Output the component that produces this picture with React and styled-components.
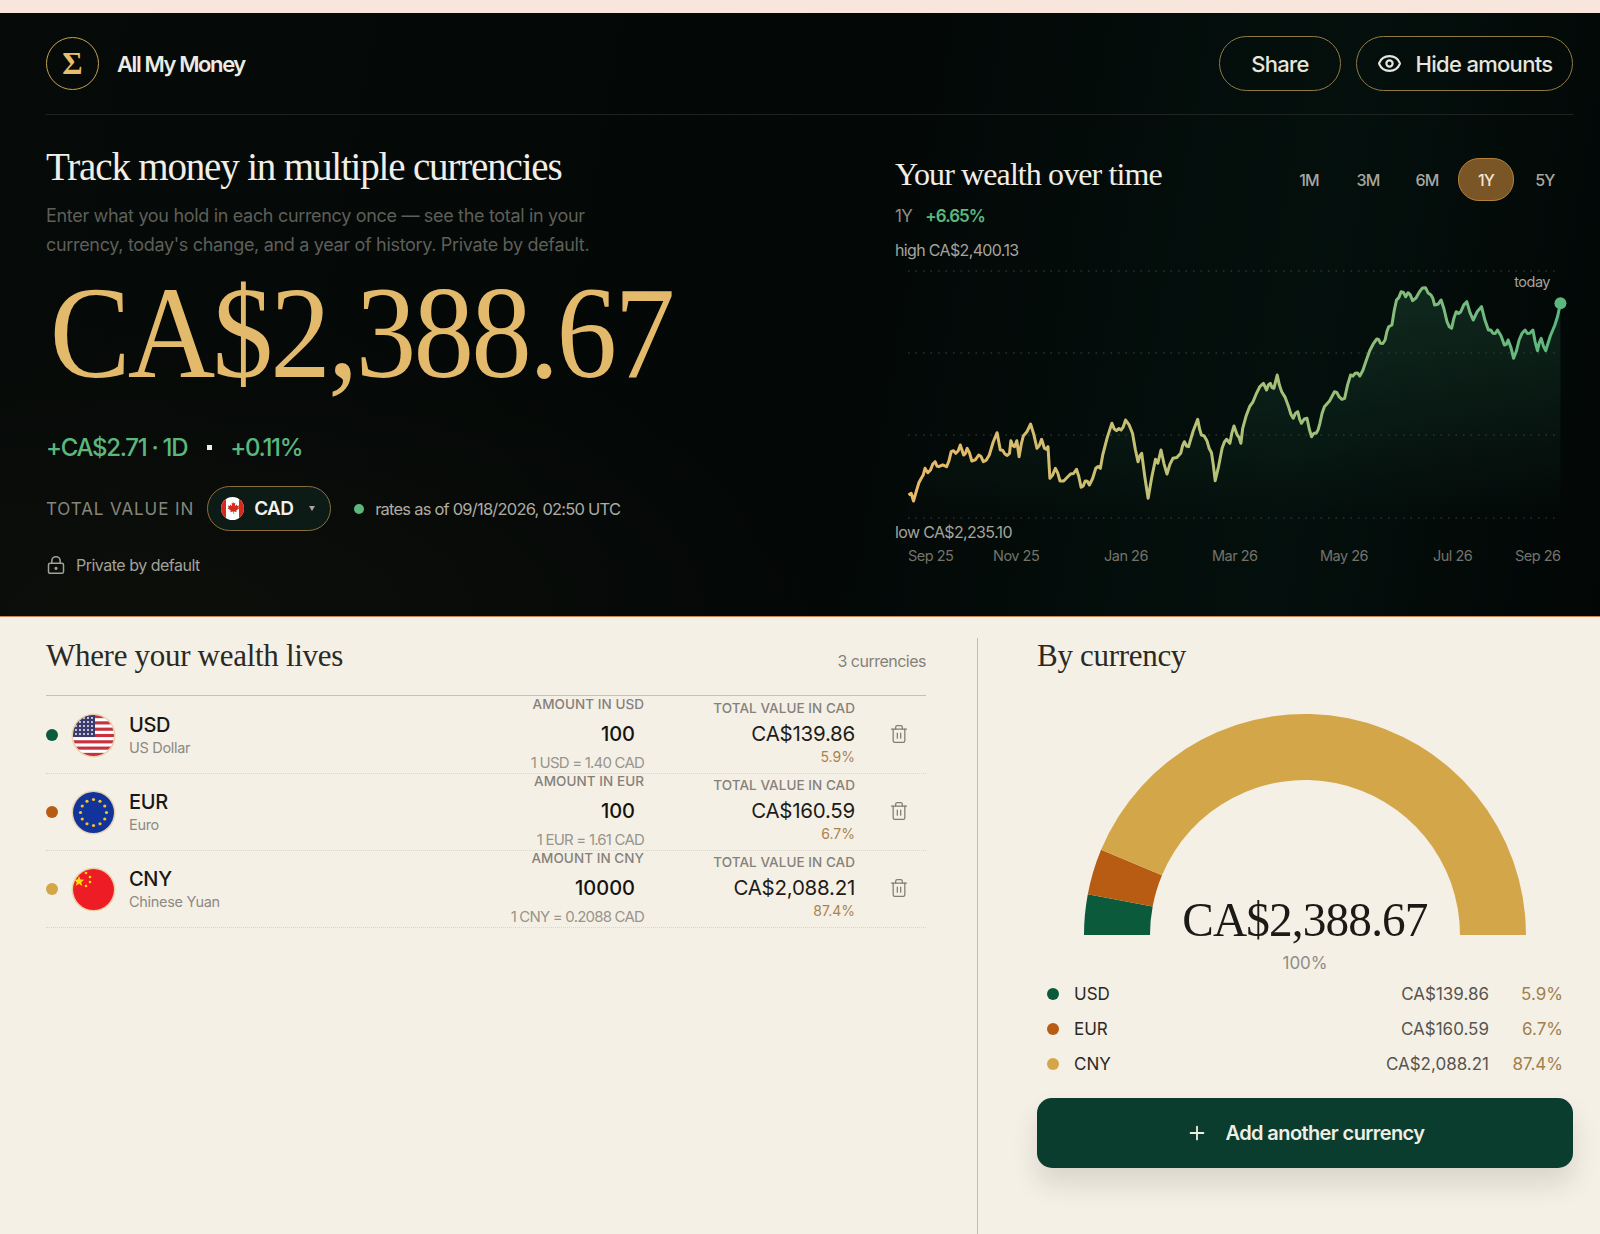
import React from 'react';
import styled, { createGlobalStyle } from 'styled-components';
import { Eye, LockKeyhole, Plus, Trash2 } from 'lucide-react';

const sans = `Inter, "Liberation Sans", sans-serif`;
const serif = `"Liberation Serif", serif`;

const GlobalStyle = createGlobalStyle`
  html, body {
    margin: 0;
    padding: 0;
    background: #f5f0e6;
  }
  body {
    font-family: ${sans};
    overflow: hidden;
  }
`;

const Page = styled.div`
  width: 1600px;
  height: 1234px;
  display: flex;
  flex-direction: column;
  background: #f5f0e6;
`;

const TopStrip = styled.div`
  height: 13px;
  background: #f8e6dd;
`;

const Hero = styled.section`
  height: 603px;
  padding: 0 27px 0 46px;
  box-sizing: content-box;
  background:
    radial-gradient(700px 300px at 10% 100%, #0c0e0a 0%, rgba(12, 14, 10, 0) 100%),
    linear-gradient(100deg, #060a08 0%, #030706 50%, #04100d 80%, #020605 100%);
  border-bottom: 1px solid #c98355;
`;

const Header = styled.header`
  height: 101px;
  display: flex;
  align-items: center;
  justify-content: space-between;
  border-bottom: 1px solid #1f2420;
`;

const Brand = styled.div`
  display: flex;
  align-items: center;
  gap: 18px;
`;

const Logo = styled.div`
  width: 51px;
  height: 51px;
  border: 1.5px solid #c9a253;
  border-radius: 50%;
  display: flex;
  align-items: center;
  justify-content: center;
  font: 700 31px ${serif};
  color: #e8bd6c;
`;

const BrandName = styled.div`
  font-size: 22px;
  font-weight: 600;
  letter-spacing: -1.4px;
  color: #ecebe4;
`;

const Actions = styled.div`
  display: flex;
  gap: 15px;
`;

const Pill = styled.button`
  height: 55px;
  width: ${p => p.$w}px;
  display: flex;
  align-items: center;
  justify-content: center;
  gap: 14px;
  background: transparent;
  border: 1.5px solid #927a44;
  border-radius: 28px;
  color: #e6e5de;
  font: 500 22px ${sans};
  letter-spacing: -0.7px;
`;

const HeroBody = styled.div`
  display: grid;
  grid-template-columns: 849px 1fr;
`;

const HeroLeft = styled.div`
  padding-top: 29px;
`;

const Title = styled.h1`
  margin: 0;
  font: 400 39px/46px ${serif};
  letter-spacing: -1.17px;
  color: #f1eee6;
`;

const Lead = styled.p`
  margin: 11px 0 0;
  font-size: 18px;
  line-height: 29px;
  letter-spacing: -0.32px;
  color: #5e5f59;
`;

const BigAmount = styled.div`
  margin-top: 4px;
  font: 400 131px/140px ${serif};
  color: #e3b96b;
  white-space: nowrap;
  letter-spacing: -3px;
  transform: scaleX(0.925);
  transform-origin: left;
  padding-left: 4px;
`;

const ChangeRow = styled.div`
  margin-top: 29px;
  height: 30px;
  display: flex;
  align-items: center;
  font-size: 24px;
  font-weight: 500;
  letter-spacing: -1.3px;
  color: #5cb77f;
`;

const ChangeDot = styled.span`
  width: 5px;
  height: 5px;
  margin: 0 18px 0 20px;
  background: #efeee8;
`;

const TotalRow = styled.div`
  margin-top: 24px;
  display: flex;
  align-items: center;
`;

const TotalLabel = styled.span`
  font-size: 17px;
  letter-spacing: 0.9px;
  color: #86867c;
  margin-right: 13px;
`;

const CurrencySelect = styled.div`
  width: 124px;
  height: 45px;
  box-sizing: border-box;
  display: flex;
  align-items: center;
  padding-left: 13px;
  gap: 10px;
  border: 1px solid #8a6f3e;
  border-radius: 23px;
  background: #0d1b17;
  color: #f1f0ea;
  font-size: 19px;
  font-weight: 600;
  letter-spacing: -0.6px;
`;

const Caret = styled.span`
  margin-left: 6px;
  border: 3.5px solid transparent;
  border-top: 5px solid #a9a79d;
  border-bottom: 0;
`;

const StatusDot = styled.span`
  width: 10px;
  height: 10px;
  margin: 0 11px 0 23px;
  border-radius: 50%;
  background: #5cb77f;
`;

const RatesText = styled.span`
  font-size: 16.5px;
  letter-spacing: -0.78px;
  color: #aeaca3;
`;

const PrivateRow = styled.div`
  margin-top: 24px;
  height: 20px;
  display: flex;
  align-items: center;
  gap: 10px;
  font-size: 16px;
  letter-spacing: -0.5px;
  color: #a3a299;
`;

const HeroRight = styled.div`
  padding-top: 43px;
`;

const ChartHead = styled.div`
  display: flex;
  justify-content: space-between;
  align-items: flex-start;
`;

const ChartTitle = styled.h2`
  margin: 0;
  font: 400 32px/32px ${serif};
  letter-spacing: -0.9px;
  color: #f1eee6;
`;

const Tabs = styled.div`
  display: flex;
  gap: 3px;
`;

const Tab = styled.span`
  width: 56px;
  height: 43px;
  box-sizing: border-box;
  display: flex;
  align-items: center;
  justify-content: center;
  border-radius: 21px;
  font-size: 16px;
  font-weight: 500;
  letter-spacing: -0.8px;
  color: ${p => (p.$active ? '#f1e6d0' : '#a8a79e')};
  background: ${p => (p.$active ? '#7a5526' : 'transparent')};
  border: 1px solid ${p => (p.$active ? '#b5813a' : 'transparent')};
`;

const PeriodRow = styled.div`
  margin-top: 4px;
  height: 22px;
  display: flex;
  align-items: center;
  gap: 13px;
  font-size: 17px;
  letter-spacing: -0.6px;
  color: #8f8f86;
`;

const Gain = styled.span`
  font-weight: 600;
  letter-spacing: -0.95px;
  color: #5cb77f;
`;

const ChartNote = styled.div`
  height: 20px;
  font-size: 16px;
  line-height: 20px;
  letter-spacing: -0.65px;
  color: #a5a49b;
  margin-top: ${p => p.$top || 0}px;
`;

const ChartWrap = styled.div`
  position: relative;
  height: 262px;
`;

const ChartSvg = styled.svg`
  display: block;
`;

const TodayLabel = styled.span`
  position: absolute;
  right: 23px;
  top: 13px;
  font-size: 14.5px;
  letter-spacing: -0.5px;
  color: #a5a49b;
`;

const Axis = styled.div`
  margin-top: 3px;
  padding-left: 13px;
  display: flex;
  height: 20px;
  align-items: center;
`;

const AxisLabel = styled.span`
  width: ${p => p.$w}px;
  font-size: 14.5px;
  letter-spacing: -0.5px;
  color: #73736b;
  white-space: nowrap;
`;

const Lower = styled.section`
  flex: 1;
  display: grid;
  grid-template-columns: 931px 1fr;
  padding: 21px 27px 0 46px;
`;

const Holdings = styled.div`
  width: 880px;
`;

const HoldingsHead = styled.div`
  height: 57px;
  display: flex;
  justify-content: space-between;
  border-bottom: 1px solid #e0bd88;
  margin-bottom: 1px;
`;

const SectionTitle = styled.h2`
  margin: 0;
  font: 400 31px/36px ${serif};
  letter-spacing: -0.3px;
  color: #2a2924;
`;

const CountNote = styled.span`
  margin-top: 13px;
  font-size: 16px;
  line-height: 20px;
  letter-spacing: -0.5px;
  color: #85817a;
`;

const Row = styled.div`
  height: 77px;
  box-sizing: border-box;
  display: grid;
  grid-template-columns: 1fr 200px 211px 71px;
  border-bottom: 1px dotted #dcd6c8;
`;

const NameCell = styled.div`
  display: flex;
  align-items: center;
`;

const SwatchDot = styled.span`
  width: 12px;
  height: 12px;
  flex: none;
  border-radius: 50%;
  background: ${p => p.$color};
`;

const FlagRing = styled.span`
  width: 41px;
  height: 41px;
  margin: 0 15px;
  flex: none;
  border-radius: 50%;
  box-shadow: 0 0 0 1.5px #e8d2ab;
  overflow: hidden;
  display: block;
`;

const NameBlock = styled.div`
  padding-top: 1px;
`;

const Code = styled.div`
  font-size: 20px;
  line-height: 24px;
  font-weight: 500;
  letter-spacing: -0.3px;
  color: #191815;
`;

const FullName = styled.div`
  margin-top: 1px;
  font-size: 14.5px;
  line-height: 20px;
  letter-spacing: -0.3px;
  color: #8c8a82;
`;

const AmountCell = styled.div`
  display: flex;
  flex-direction: column;
  align-items: flex-end;
  white-space: nowrap;
`;

const SmallCaps = styled.div`
  margin-top: ${p => p.$top}px;
  font-size: 13.5px;
  line-height: 14px;
  font-weight: 500;
  letter-spacing: 0.05px;
  color: #85817a;
  text-transform: uppercase;
`;

const AmountValue = styled.div`
  margin-top: 11px;
  padding-right: 9px;
  font-size: 20px;
  line-height: 24px;
  font-weight: 500;
  color: #141310;
`;

const Rate = styled.div`
  margin-top: 8px;
  font-size: 15px;
  line-height: 18px;
  letter-spacing: -0.8px;
  color: #98958c;
`;

const TotalValue = styled.div`
  margin-top: 7px;
  font-size: 20.5px;
  line-height: 24px;
  letter-spacing: -0.25px;
  color: #1d1c18;
`;

const Share = styled.div`
  margin-top: 3px;
  font-size: 14px;
  line-height: 16px;
  color: #a9834d;
`;

const DeleteCell = styled.div`
  display: flex;
  align-items: center;
  padding: 0 0 2px 34px;
  color: #7f7c74;
`;

const Breakdown = styled.aside`
  border-left: 1px solid #dcb983;
  padding-left: 59px;
`;

const GaugeWrap = styled.div`
  position: relative;
  margin-top: 39px;
  height: 222px;
  display: flex;
  justify-content: center;
`;

const GaugeTotal = styled.div`
  position: absolute;
  left: 0;
  right: 0;
  bottom: -13px;
  text-align: center;
  font: 400 49px/56px ${serif};
  letter-spacing: -0.9px;
  color: #1b1a16;
  transform: scaleX(0.965);
`;

const GaugePct = styled.div`
  margin-top: 17px;
  text-align: center;
  font-size: 17px;
  line-height: 22px;
  color: #8f8c84;
`;

const Legend = styled.div`
  margin-top: 2px;
  padding: 0 10px;
`;

const LegendRow = styled.div`
  height: 35px;
  display: flex;
  align-items: center;
  gap: 15px;
  font-size: 17px;
  color: #2a2924;
`;

const LegendAmount = styled.span`
  margin-left: auto;
  color: #57554e;
`;

const LegendPct = styled.span`
  width: 59px;
  text-align: right;
  color: #a0804c;
`;

const AddButton = styled.button`
  margin-top: 17px;
  width: 100%;
  height: 70px;
  display: flex;
  align-items: center;
  justify-content: center;
  gap: 18px;
  border: 0;
  border-radius: 15px;
  background: #0a3d2e;
  color: #f1eee6;
  font: 600 20px ${sans};
  letter-spacing: -0.6px;
  box-shadow: 0 16px 26px rgba(40, 40, 30, 0.13);
`;

// traced off the reference: [x, y] in chart pixels, left part then right part
const rawLeft = [[62,285],[68,280],[73,303],[80,270],[90,235],[98,205],[104,218],[110,210],[120,185],[128,200],[145,200],[155,155],[165,160],[175,135],[182,165],[190,145],[200,183],[215,165],[225,185],[238,165],[255,98],[262,150],[272,162],[282,160],[285,122],[293,140],[298,122],[303,170],[312,108],[328,72],[342,145],[352,118],[358,145],[366,140],[370,235],[382,205],[392,243],[408,232],[415,222],[428,208],[438,262],[447,243],[456,255],[470,205],[480,205],[485,165],[505,70],[515,92],[525,90],[535,60],[550,100],[562,185],[570,160],[584,295],[600,178],[605,190],[612,150],[625,222],[638,175],[655,160],[663,125],[672,140],[692,58],[700,105],[712,122],[722,158],[730,242],[745,145],[755,118],[762,130],[771,78],[778,105],[786,130]];
const rawRight = [[790,865],[805,800],[820,760],[835,730],[842,750],[850,730],[858,745],[865,705],[875,755],[890,800],[900,835],[910,815],[918,850],[930,835],[940,890],[950,880],[958,850],[968,800],[990,755],[1000,770],[1012,775],[1025,705],[1035,700],[1045,708],[1058,665],[1075,610],[1082,597],[1090,610],[1100,600],[1108,560],[1115,555],[1125,480],[1135,455],[1145,470],[1150,458],[1160,482],[1175,455],[1188,443],[1200,465],[1208,495],[1222,480],[1235,545],[1245,565],[1255,515],[1265,515],[1278,485],[1292,540],[1310,500],[1325,570],[1335,580],[1345,570],[1360,615],[1368,600],[1380,655],[1392,600],[1405,570],[1415,580],[1422,570],[1432,632],[1440,595],[1450,632],[1470,555],[1482,490]];

const toX = x => 880 + x / 2.178 - 895;
const traced = [
  ...rawLeft.map(([x, y]) => [toX(x), 400 + y / 3 - 260]),
  ...rawRight.map(([x, y]) => [toX(x), 140 + y / 3 - 260]),
];

// daily jitter between the traced points, the line is noisier than the trace
const noisy = traced.flatMap((pt, i) => {
  const next = traced[i + 1];
  if (!next || next[0] - pt[0] < 3.5) return [pt];
  const wobble = i % 2 === 0 ? 1.8 : -1.8;
  return [pt, [(pt[0] + next[0]) / 2, (pt[1] + next[1]) / 2 + wobble]];
});

const linePath = `M${noisy.map(([x, y]) => `${x.toFixed(1)},${y.toFixed(1)}`).join(' L')}`;
const areaPath = `${linePath} L${toX(1482).toFixed(1)},258 L${toX(62).toFixed(1)},258 Z`;
const endPoint = [toX(1482), 140 + 490 / 3 - 260];

const WealthChart = () => (
  <ChartSvg width="678" height="262" viewBox="0 0 678 262">
    <defs>
      <linearGradient id="lineGrad" x1="0" x2="1" y1="0" y2="0">
        <stop offset="0%" stopColor="#eab968" />
        <stop offset="45%" stopColor="#b9c277" />
        <stop offset="100%" stopColor="#5cb77f" />
      </linearGradient>
      <linearGradient id="areaGrad" x1="0" x2="0" y1="0" y2="1">
        <stop offset="0%" stopColor="#2c6a4c" stopOpacity="0.3" />
        <stop offset="100%" stopColor="#2c6a4c" stopOpacity="0" />
      </linearGradient>
    </defs>
    <path d={areaPath} fill="url(#areaGrad)" />
    {[11, 93, 175, 258].map(y => (
      <line key={y} x1="13" x2="662" y1={y} y2={y} stroke="#3d4640" strokeWidth="1" strokeDasharray="1.5 6" />
    ))}
    <path d={linePath} fill="none" stroke="url(#lineGrad)" strokeWidth="3" strokeLinejoin="round" />
    <circle cx={endPoint[0]} cy={endPoint[1]} r="6" fill="#5cb77f" />
  </ChartSvg>
);

const polar = (r, deg) => {
  const a = (deg * Math.PI) / 180;
  return [221 - r * Math.cos(a), 222 - r * Math.sin(a)];
};

const arcPath = (from, to) => {
  const [x1, y1] = polar(221, from);
  const [x2, y2] = polar(221, to);
  const [x3, y3] = polar(155, to);
  const [x4, y4] = polar(155, from);
  return `M${x1} ${y1} A221 221 0 0 1 ${x2} ${y2} L${x3} ${y3} A155 155 0 0 0 ${x4} ${y4} Z`;
};

const Gauge = () => (
  <svg width="442" height="222" viewBox="0 0 442 222">
    <path d={arcPath(0, 10.62)} fill="#0b5a3c" />
    <path d={arcPath(10.62, 22.68)} fill="#b85c14" />
    <path d={arcPath(22.68, 180)} fill="#d4a64a" />
  </svg>
);

const UsFlag = () => (
  <svg width="41" height="41" viewBox="0 0 41 41">
    <rect width="41" height="41" fill="#fff" />
    {[0, 1, 2, 3, 4, 5, 6].map(i => (
      <rect key={i} y={i * 6.31} width="41" height="3.15" fill="#c8313e" />
    ))}
    <rect width="22" height="22" fill="#3c3b6e" />
    {[0, 1, 2, 3, 4].map(r =>
      [0, 1, 2, 3, 4].map(c => (
        <circle key={`${r}-${c}`} cx={3 + c * 4} cy={3 + r * 4} r="0.9" fill="#fff" />
      ))
    )}
  </svg>
);

const EuFlag = () => (
  <svg width="41" height="41" viewBox="0 0 41 41">
    <rect width="41" height="41" fill="#12349a" />
    {Array.from({ length: 12 }, (_, i) => {
      const a = (i * Math.PI) / 6;
      return <circle key={i} cx={20.5 + 13 * Math.cos(a)} cy={20.5 + 13 * Math.sin(a)} r="1.6" fill="#f5c518" />;
    })}
  </svg>
);

const CnFlag = () => (
  <svg width="41" height="41" viewBox="0 0 41 41">
    <rect width="41" height="41" fill="#ee1c25" />
    <polygon points="6,7 7.4,10.6 11.2,10.8 8.2,13.2 9.3,17 6,14.8 2.7,17 3.8,13.2 0.8,10.8 4.6,10.6" fill="#ffde00" />
    {[[13, 4], [17, 8], [17, 13], [13, 17]].map(([x, y]) => (
      <circle key={x + '' + y} cx={x} cy={y} r="1.3" fill="#ffde00" />
    ))}
  </svg>
);

const CaFlag = () => (
  <svg width="23" height="23" viewBox="0 0 23 23" style={{ borderRadius: '50%', flex: 'none' }}>
    <rect width="23" height="23" fill="#fff" />
    <rect width="5" height="23" fill="#d52b1e" />
    <rect x="18" width="5" height="23" fill="#d52b1e" />
    <path d="M11.5 4l1.4 2.6 1.5-.8-.6 3.4 1.9-1.6.5 1.3 1.8-.3-.6 2 .9.6-3 2.4.4 1.3-2.9-.4V17h-.6v-2.5l-2.9.4.4-1.3-3-2.4.9-.6-.6-2 1.8.3.5-1.3 1.9 1.6-.6-3.4 1.5.8z" fill="#d52b1e" />
  </svg>
);

const holdings = [
  { code: 'USD', name: 'US Dollar', color: '#0b5a3c', Flag: UsFlag, amount: '100', rate: '1 USD = 1.40 CAD', total: 'CA$139.86', pct: '5.9%' },
  { code: 'EUR', name: 'Euro', color: '#b85c14', Flag: EuFlag, amount: '100', rate: '1 EUR = 1.61 CAD', total: 'CA$160.59', pct: '6.7%' },
  { code: 'CNY', name: 'Chinese Yuan', color: '#d4a64a', Flag: CnFlag, amount: '10000', rate: '1 CNY = 0.2088 CAD', total: 'CA$2,088.21', pct: '87.4%' },
];

const ranges = ['1M', '3M', '6M', '1Y', '5Y'];
const axis = [['Sep 25', 85], ['Nov 25', 111], ['Jan 26', 108], ['Mar 26', 108], ['May 26', 113], ['Jul 26', 82], ['Sep 26', 46]];

const App = () => (
  <Page>
    <GlobalStyle />
    <TopStrip />
    <Hero>
      <Header>
        <Brand>
          <Logo>Σ</Logo>
          <BrandName>All My Money</BrandName>
        </Brand>
        <Actions>
          <Pill $w={122}>Share</Pill>
          <Pill $w={217}>
            <Eye size={25} strokeWidth={2.1} />
            Hide amounts
          </Pill>
        </Actions>
      </Header>
      <HeroBody>
        <HeroLeft>
          <Title>Track money in multiple currencies</Title>
          <Lead>
            Enter what you hold in each currency once — see the total in your
            <br />
            currency, today's change, and a year of history. Private by default.
          </Lead>
          <BigAmount>CA$2,388.67</BigAmount>
          <ChangeRow>
            +CA$2.71 · 1D
            <ChangeDot />
            +0.11%
          </ChangeRow>
          <TotalRow>
            <TotalLabel>TOTAL VALUE IN</TotalLabel>
            <CurrencySelect>
              <CaFlag />
              CAD
              <Caret />
            </CurrencySelect>
            <StatusDot />
            <RatesText>rates as of 09/18/2026, 02:50 UTC</RatesText>
          </TotalRow>
          <PrivateRow>
            <LockKeyhole size={20} strokeWidth={1.8} />
            Private by default
          </PrivateRow>
        </HeroLeft>
        <HeroRight>
          <ChartHead>
            <ChartTitle>Your wealth over time</ChartTitle>
            <Tabs>
              {ranges.map(r => (
                <Tab key={r} $active={r === '1Y'}>{r}</Tab>
              ))}
            </Tabs>
          </ChartHead>
          <PeriodRow>
            1Y
            <Gain>+6.65%</Gain>
          </PeriodRow>
          <ChartNote $top={13}>high CA$2,400.13</ChartNote>
          <ChartWrap>
            <WealthChart />
            <TodayLabel>today</TodayLabel>
          </ChartWrap>
          <ChartNote>low CA$2,235.10</ChartNote>
          <Axis>
            {axis.map(([label, w]) => (
              <AxisLabel key={label} $w={w}>{label}</AxisLabel>
            ))}
          </Axis>
        </HeroRight>
      </HeroBody>
    </Hero>
    <Lower>
      <Holdings>
        <HoldingsHead>
          <SectionTitle>Where your wealth lives</SectionTitle>
          <CountNote>3 currencies</CountNote>
        </HoldingsHead>
        {holdings.map(({ code, name, color, Flag, amount, rate, total, pct }) => (
          <Row key={code}>
            <NameCell>
              <SwatchDot $color={color} />
              <FlagRing>
                <Flag />
              </FlagRing>
              <NameBlock>
                <Code>{code}</Code>
                <FullName>{name}</FullName>
              </NameBlock>
            </NameCell>
            <AmountCell>
              <SmallCaps $top={0}>Amount in {code}</SmallCaps>
              <AmountValue>{amount}</AmountValue>
              <Rate>{rate}</Rate>
            </AmountCell>
            <AmountCell>
              <SmallCaps $top={4}>Total value in CAD</SmallCaps>
              <TotalValue>{total}</TotalValue>
              <Share>{pct}</Share>
            </AmountCell>
            <DeleteCell>
              <Trash2 size={20} strokeWidth={1.5} />
            </DeleteCell>
          </Row>
        ))}
      </Holdings>
      <Breakdown>
        <SectionTitle>By currency</SectionTitle>
        <GaugeWrap>
          <Gauge />
          <GaugeTotal>CA$2,388.67</GaugeTotal>
        </GaugeWrap>
        <GaugePct>100%</GaugePct>
        <Legend>
          {holdings.map(({ code, color, total, pct }) => (
            <LegendRow key={code}>
              <SwatchDot $color={color} />
              {code}
              <LegendAmount>{total}</LegendAmount>
              <LegendPct>{pct}</LegendPct>
            </LegendRow>
          ))}
        </Legend>
        <AddButton>
          <Plus size={22} strokeWidth={2} />
          Add another currency
        </AddButton>
      </Breakdown>
    </Lower>
  </Page>
);

export default App;
